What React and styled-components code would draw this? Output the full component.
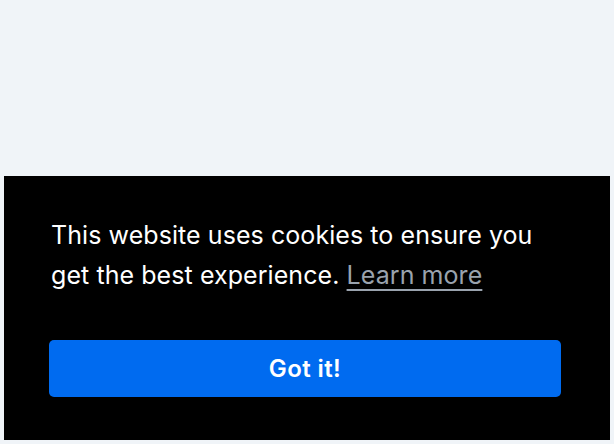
import styled, { createGlobalStyle } from "styled-components";

const Global = createGlobalStyle`
  html, body {
    margin: 0;
    padding: 0;
    background: #f0f4f8;
    font-family: Inter, "Noto Sans", sans-serif;
  }
`;

const Page = styled.div`
  height: 444px;
  display: flex;
  flex-direction: column;
  justify-content: flex-end;
  padding: 0 4px 4px;
  box-sizing: border-box;
`;

const Banner = styled.div`
  height: 264px;
  background: #000;
  box-sizing: border-box;
  padding: 39px 49px 43px 45px;
  display: flex;
  flex-direction: column;
  justify-content: space-between;
`;

const Message = styled.p`
  margin: 0;
  padding-left: 2px;
  color: #fff;
  font-size: 25px;
  letter-spacing: 0.07px;
  line-height: 40px;
`;

const LearnMore = styled.a`
  color: #9aa3ae;
  text-decoration: underline;
  text-underline-offset: 5px;
  text-decoration-thickness: 2px;
`;

const Button = styled.button`
  height: 57px;
  width: 100%;
  border: none;
  border-radius: 5px;
  background: #006bf0;
  color: #fff;
  font-family: Inter, "Noto Sans", sans-serif;
  font-size: 24px;
  font-weight: 600;
  letter-spacing: 0.4px;
`;

export default function App() {
  return (
    <>
      <Global />
      <Page>
        <Banner>
          <Message>
            This website uses cookies to ensure you get the best experience.{" "}
            <LearnMore href="#">Learn more</LearnMore>
          </Message>
          <Button>Got it!</Button>
        </Banner>
      </Page>
    </>
  );
}
